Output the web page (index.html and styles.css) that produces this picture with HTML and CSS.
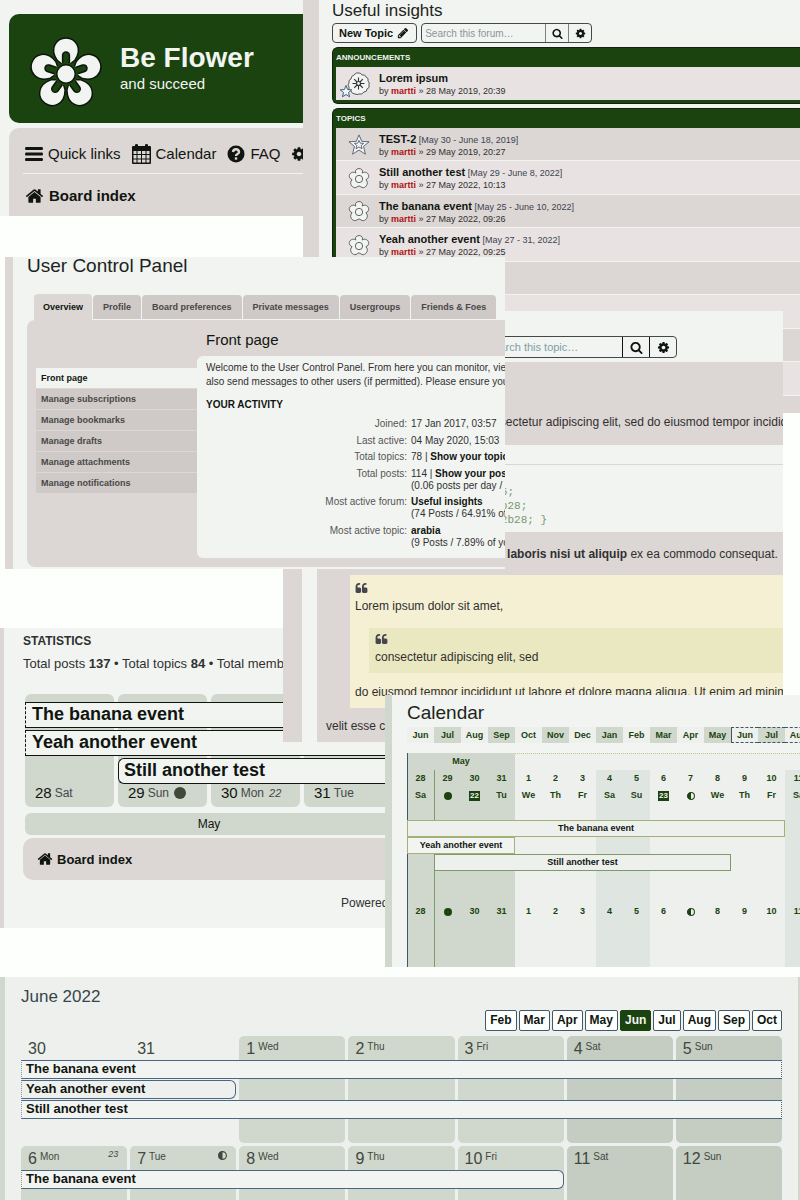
FILE: index.html
```html
<!DOCTYPE html>
<html lang="en">
<head>
<meta charset="utf-8">
<title>Be Flower</title>
<link rel="stylesheet" href="styles.css">
</head>
<body>
<svg class="defs" aria-hidden="true">
  <symbol id="home" viewBox="0 0 1792 1792"><path d="M1472 992v480q0 26-19 45t-45 19h-384v-384h-256v384h-384q-26 0-45-19t-19-45v-480q0-1 .5-3t.5-3l575-474 575 474q1 2 1 6zm223-69l-62 74q-8 9-21 11h-3q-13 0-21-7l-692-577-692 577q-12 8-24 7-13-2-21-11l-62-74q-8-10-7-23.5t11-21.5l719-599q32-26 76-26t76 26l244 204v-195q0-14 9-23t23-9h192q14 0 23 9t9 23v408l219 182q10 8 11 21.5t-7 23.5z"/></symbol>
  <symbol id="cog" viewBox="0 0 1792 1792"><path d="M1152 896q0-106-75-181t-181-75-181 75-75 181 75 181 181 75 181-75 75-181zm512-109v222q0 12-8 23t-20 13l-185 28q-19 54-39 91 35 50 107 138 10 12 10 25t-9 23q-27 37-99 108t-94 71q-12 0-26-9l-138-108q-44 23-91 38-16 136-29 186-7 28-36 28h-222q-14 0-24.5-8.5t-11.5-21.5l-28-184q-49-16-90-37l-141 107q-10 9-25 9-14 0-25-11-126-114-165-168-7-10-7-23 0-12 8-23 15-21 51-66.5t54-70.5q-27-50-41-99l-183-27q-13-2-21-12.5t-8-23.5v-222q0-12 8-23t19-13l186-28q14-46 39-92-40-57-107-138-10-12-10-24 0-10 9-23 26-36 98.5-107.5t94.5-71.5q13 0 26 10l138 107q44-23 91-38 16-136 29-186 7-28 36-28h222q14 0 24.5 8.5t11.5 21.5l28 184q49 16 90 37l142-107q9-9 24-9 13 0 25 10 129 119 165 170 7 8 7 22 0 12-8 23-15 21-51 66.5t-54 70.5q26 50 41 98l183 28q13 2 21 12.5t8 23.5z"/></symbol>
  <symbol id="search" viewBox="0 0 1792 1792"><path d="M1216 832q0-185-131.5-316.5t-316.5-131.5-316.5 131.5-131.5 316.5 131.5 316.5 316.5 131.5 316.5-131.5 131.5-316.5zm512 832q0 52-38 90t-90 38q-54 0-90-38l-343-342q-179 124-399 124-143 0-273.5-55.5t-225-150-150-225-55.5-273.5 55.5-273.5 150-225 225-150 273.5-55.5 273.5 55.5 225 150 150 225 55.5 273.5q0 220-124 399l343 343q37 37 37 90z"/></symbol>
  <symbol id="pencil" viewBox="0 0 1792 1792"><path d="M491 1536l91-91-235-235-91 91v107h128v128h107zm523-928q0-22-22-22-10 0-17 7l-542 542q-7 7-7 17 0 22 22 22 10 0 17-7l542-542q7-7 7-17zm-54-192l416 416-832 832h-416v-416zm683 96q0 53-37 90l-166 166-416-416 166-165q36-38 90-38 53 0 91 38l235 234q37 39 37 91z"/></symbol>
  <symbol id="bars" viewBox="0 0 18 18"><path d="M1 2h16q1 0 1 1.5T17 5H1Q0 5 0 3.500T1 2zm0 5.500h16q1 0 1 1.500t-1 1.500H1q-1 0-1-1.500t1-1.500zM1 13h16q1 0 1 1.500T17 16H1q-1 0-1-1.500T1 13z"/></symbol>
  <symbol id="calendar" viewBox="0 0 19 20"><path fill-rule="evenodd" d="M3 2V1q0-1 1.500-1T6 1v1h7V1q0-1 1.500-1T16 1v1h2q1 0 1 1v16q0 1-1 1H1q-1 0-1-1V3q0-1 1-1zM1.500 7v3h3V7zm4 0v3h3.500V7zM10 7v3h3.500V7zm4.500 0v3h3V7zM1.500 11v3.500h3V11zm4 0v3.500H9V11zm4.500 0v3.500h3.500V11zm4.500 0v3.500h3V11zm-13 4.500v3h3v-3zm4 0v3H9v-3zm4.500 0v3h3.500v-3zm4.500 0v3h3v-3z"/></symbol>
  <symbol id="help" viewBox="0 0 18 18"><circle cx="9" cy="9" r="8.500"/><path d="M6 7Q6.300 4.300 9 4.300T12 7q0 1.300-1.500 2T9 11" fill="none" stroke="#dcd6d4" stroke-width="2.400"/><path d="M7.800 12.300h2.400v2.400H7.800z" fill="#dcd6d4"/></symbol>
  <symbol id="quote" viewBox="0 0 1792 1408"><g id="mark"><path d="M832 768v384q0 80-56 136t-136 56H256q-80 0-136-56T64 1152V448q0-104 40.500-198.500T214 86 377.500-23.500 576-64h64q26 0 45 19t19 45v128q0 26-19 45t-45 19h-64q-106 0-181 75t-75 181v32q0 40 28 68t68 28h224q80 0 136 56t56 136z" transform="translate(0 64)"/></g><use href="#mark" x="896"/></symbol>
  <symbol id="half" viewBox="0 0 10 10"><circle cx="5" cy="5" r="4.300" fill="none" stroke="currentColor" stroke-width="1.300"/><path d="M5 .5a4.500 4.500 0 0 0 0 9z"/></symbol>
  <symbol id="disc" viewBox="0 0 10 10"><circle cx="5" cy="5" r="5"/></symbol>
  <symbol id="bloom" viewBox="-12 -12 24 24"><g fill="#f2f4f1" stroke="#45484a" stroke-width=".9"><path d="M-3.500-6.500C-6-13 6-13 3.500-6.500 9-10 14-2 7.500.8 12 5 6 12 2 8.500L0 7.500-2 8.500C-6 12-12 5-7.500.8-14-2-9-10-3.500-6.500z"/><circle r="4"/></g></symbol>
  <symbol id="star" viewBox="-12 -12 24 24"><g fill="#f2f4f1" stroke="#45506a" stroke-width=".9"><path d="M0-11l3 7 8 .5-6 5 2 8.500-7-4.500-7 4.500 2-8.500-6-5 8-.5z"/><path d="M0-5l1.500 3 3.500.2-2.600 2.300.9 3.500L0 2.200-3.300 4l.9-3.500L-5-1.800-1.500-2z"/></g></symbol>
  <symbol id="news" viewBox="0 0 30 26"><g fill="#f2f4f1" stroke="#45484a" stroke-width=".9"><path d="M19 1q2 0 3 2 3-1 4 2 3 1 2 4 2 2 1 4 1 3-2 4 0 3-3 3-2 3-5 2-2 1-4 0-3 0-4-3-3-1-2-4-2-2 0-4-1-3 2-4 0-3 3-4 2-3 5-2z"/></g><g fill="none" stroke="#303436" stroke-width="1.100"><path d="M18.500 5.500v4m0 4v4M12.500 11.500h4m4 0h4M14.200 7.200l2.800 2.800m3 3l2.800 2.800m0-8.600L20 10m-3 3l-2.800 2.800"/><circle cx="18.500" cy="11.500" r="2" fill="#f2f4f1"/></g><path d="M6 13.500l1.600 4 4.200.3-3.300 2.700 1.100 4.300L6 22.500l-3.600 2.300 1.100-4.300L.2 17.800l4.200-.3z" fill="#f2f4f1" stroke="#3c6480"/></symbol>
  <symbol id="logo" viewBox="-38 -38 76 76">
    <g id="petal"><path d="M-4-10L-9-14C-18-27-9-37 0-37S18-27 9-14L4-10z" fill="#f2f4f1" stroke="#0b150a" stroke-width="1.500"/><path d="M0-8V-19" stroke="#0b150a" stroke-width="8.500" stroke-linecap="round"/><path d="M0-5V-19" stroke="#1b430f" stroke-width="5.500" stroke-linecap="round"/></g>
    <use href="#petal" transform="rotate(72)"/><use href="#petal" transform="rotate(144)"/><use href="#petal" transform="rotate(216)"/><use href="#petal" transform="rotate(288)"/>
    <circle r="12" fill="#1b430f"/><circle r="9.500" fill="#f2f4f1" stroke="#0b150a" stroke-width="1.500"/>
  </symbol>
</svg>

<main class="canvas">
  <section class="window brand">
    <header class="banner">
      <svg class="logo"><use href="#logo"/></svg>
      <div><h1>Be Flower</h1><p>and succeed</p></div>
    </header>
    <nav class="nav">
      <div class="nav-links">
        <a href="#"><svg class="i18"><use href="#bars"/></svg>Quick links</a>
        <a href="#"><svg class="i19"><use href="#calendar"/></svg>Calendar</a>
        <a href="#"><svg class="i18"><use href="#help"/></svg>FAQ</a>
        <a href="#" aria-label="Settings"><svg class="i16"><use href="#cog"/></svg></a>
      </div>
      <a class="crumb" href="#"><svg class="i19"><use href="#home"/></svg>Board index</a>
    </nav>
  </section>

  <section class="window forum">
    <h2>Useful insights</h2>
    <div class="actions">
      <button class="btn">New Topic <svg class="i12"><use href="#pencil"/></svg></button>
      <form class="search">
        <input type="search" aria-label="Search this forum" placeholder="Search this forum…">
        <button type="button" aria-label="Search"><svg class="i11"><use href="#search"/></svg></button>
        <button type="button" aria-label="Advanced search"><svg class="i11"><use href="#cog"/></svg></button>
      </form>
    </div>
    <div class="block news">
      <h3>Announcements</h3>
      <ul>
        <li><svg class="wide"><use href="#news"/></svg><div><a href="#">Lorem ipsum</a><p>by <b>martti</b> » 28 May 2019, 20:39</p></div></li>
      </ul>
    </div>
    <div class="block topics">
      <h3>Topics</h3>
      <ul>
        <li><svg><use href="#star"/></svg><div><a href="#">TEST-2</a> <span>[May 30 - June 18, 2019]</span><p>by <b>martti</b> » 29 May 2019, 20:27</p></div></li>
        <li><svg><use href="#bloom"/></svg><div><a href="#">Still another test</a> <span>[May 29 - June 8, 2022]</span><p>by <b>martti</b> » 27 May 2022, 10:13</p></div></li>
        <li><svg><use href="#bloom"/></svg><div><a href="#">The banana event</a> <span>[May 25 - June 10, 2022]</span><p>by <b>martti</b> » 27 May 2022, 09:26</p></div></li>
        <li><svg><use href="#bloom"/></svg><div><a href="#">Yeah another event</a> <span>[May 27 - 31, 2022]</span><p>by <b>martti</b> » 27 May 2022, 09:25</p></div></li>
        <li></li><li></li><li></li><li></li><li></li>
      </ul>
    </div>
  </section>

  <section class="window stats">
    <h3>Statistics</h3>
    <p class="totals">Total posts <b>137</b> • Total topics <b>84</b> • Total members</p>
    <div class="strip">
      <div class="day d1"></div><div class="day d2"></div><div class="day d3"></div><div class="day d4"></div>
      <a class="event e1" href="#">The banana event</a>
      <a class="event e2" href="#">Yeah another event</a>
      <a class="event e3" href="#">Still another test</a>
      <div class="date d1">28 <small>Sat</small></div>
      <div class="date d2">29 <small>Sun</small> <svg><use href="#disc"/></svg></div>
      <div class="date d3">30 <small>Mon</small> <em>22</em></div>
      <div class="date d4">31 <small>Tue</small></div>
    </div>
    <div class="month">May</div>
    <nav class="foot"><a href="#"><svg class="i16"><use href="#home"/></svg>Board index</a></nav>
    <p class="powered">Powered</p>
  </section>

  <section class="window topic">
    <div class="tools">
      <form class="search">
        <input type="search" aria-label="Search this topic" placeholder="Search this topic…">
        <button type="button" aria-label="Search"><svg class="i13"><use href="#search"/></svg></button>
        <button type="button" aria-label="Advanced search"><svg class="i13"><use href="#cog"/></svg></button>
      </form>
    </div>
    <p class="post">Lorem ipsum dolor sit amet, consectetur adipiscing elit, sed do eiusmod tempor incididunt</p>
    <div class="codebox"><pre>  outline: solid #334455;
  border:1px solid #102b28;
  background-color: #102b28; }</pre></div>
    <p class="after">quis nostrud exercitation ullamco <b>laboris nisi ut aliquip</b> ex ea commodo consequat.</p>
    <blockquote>
      <svg><use href="#quote"/></svg>
      <p>Lorem ipsum dolor sit amet,</p>
      <blockquote>
        <svg><use href="#quote"/></svg>
        <p>consectetur adipiscing elit, sed</p>
      </blockquote>
      <p>do eiusmod tempor incididunt ut labore et dolore magna aliqua. Ut enim ad minim veniam</p>
    </blockquote>
    <p class="tail">velit esse cillum</p>
  </section>

  <section class="window ucp">
    <h2>User Control Panel</h2>
    <nav class="tabs">
      <a class="on" href="#">Overview</a><a href="#">Profile</a><a href="#">Board preferences</a><a href="#">Private messages</a><a href="#">Usergroups</a><a href="#">Friends &amp; Foes</a>
    </nav>
    <div class="panel">
      <nav class="side">
        <a class="on" href="#">Front page</a><a href="#">Manage subscriptions</a><a href="#">Manage bookmarks</a><a href="#">Manage drafts</a><a href="#">Manage attachments</a><a href="#">Manage notifications</a>
      </nav>
      <div class="main">
        <h3>Front page</h3>
        <div class="sheet">
          <p>Welcome to the User Control Panel. From here you can monitor, view and<br>also send messages to other users (if permitted). Please ensure you read</p>
          <h4>Your activity</h4>
          <dl>
            <dt>Joined:</dt><dd>17 Jan 2017, 03:57</dd>
            <dt>Last active:</dt><dd>04 May 2020, 15:03</dd>
            <dt>Total topics:</dt><dd>78 | <a href="#">Show your topics</a></dd>
            <dt>Total posts:</dt><dd>114 | <a href="#">Show your posts</a><br>(0.06 posts per day / 5%)</dd>
            <dt>Most active forum:</dt><dd><a href="#">Useful insights</a><br>(74 Posts / 64.91% of your posts)</dd>
            <dt>Most active topic:</dt><dd><a href="#">arabia</a><br>(9 Posts / 7.89% of your posts)</dd>
          </dl>
        </div>
      </div>
    </div>
  </section>

  <section class="window timeline">
    <h2>Calendar</h2>
    <nav class="months">
      <a href="#">Jun</a><a href="#">Jul</a><a href="#">Aug</a><a href="#">Sep</a><a href="#">Oct</a><a href="#">Nov</a><a href="#">Dec</a><a href="#">Jan</a><a href="#">Feb</a><a href="#">Mar</a><a href="#">Apr</a><a href="#">May</a><a class="cur first" href="#">Jun</a><a class="cur" href="#">Jul</a><a class="cur" href="#">Aug</a>
    </nav>
    <div class="gantt">
      <div class="may"></div><div class="june"></div><div class="we w1"></div><div class="we w2"></div><div class="today"></div>
      <div class="label">May</div>
      <div class="cells nums"><span>28</span><span>29</span><span>30</span><span>31</span><span>1</span><span>2</span><span>3</span><span>4</span><span>5</span><span>6</span><span>7</span><span>8</span><span>9</span><span>10</span><span>11</span></div>
      <div class="cells names"><span>Sa</span><span><svg><use href="#disc"/></svg></span><span><b>22</b></span><span>Tu</span><span>We</span><span>Th</span><span>Fr</span><span>Sa</span><span>Su</span><span><b>23</b></span><span><svg><use href="#half"/></svg></span><span>We</span><span>Th</span><span>Fr</span><span>Sa</span></div>
      <a class="bar b1" href="#">The banana event</a>
      <a class="bar b2" href="#">Yeah another event</a>
      <a class="bar b3" href="#">Still another test</a>
      <div class="cells again"><span>28</span><span><svg><use href="#disc"/></svg></span><span>30</span><span>31</span><span>1</span><span>2</span><span>3</span><span>4</span><span>5</span><span>6</span><span><svg><use href="#half"/></svg></span><span>8</span><span>9</span><span>10</span><span>11</span></div>
    </div>
  </section>

  <section class="window monthly">
    <h2>June 2022</h2>
    <nav class="picker">
      <a href="#">Feb</a><a href="#">Mar</a><a href="#">Apr</a><a href="#">May</a><a class="on" href="#">Jun</a><a href="#">Jul</a><a href="#">Aug</a><a href="#">Sep</a><a href="#">Oct</a>
    </nav>
    <div class="week">
      <div class="cell d1 out">30</div><div class="cell d2 out">31</div><div class="cell d3">1 <small>Wed</small></div><div class="cell d4">2 <small>Thu</small></div><div class="cell d5">3 <small>Fri</small></div><div class="cell d6 end">4 <small>Sat</small></div><div class="cell d7 end">5 <small>Sun</small></div>
      <a class="item r2 full open" href="#">The banana event</a>
      <a class="item r3 two" href="#">Yeah another event</a>
      <a class="item r4 full open" href="#">Still another test</a>
    </div>
    <div class="week">
      <div class="cell d1">6 <small>Mon</small><em>23</em></div><div class="cell d2">7 <small>Tue</small><svg><use href="#half"/></svg></div><div class="cell d3">8 <small>Wed</small></div><div class="cell d4">9 <small>Thu</small></div><div class="cell d5">10 <small>Fri</small></div><div class="cell d6 end">11 <small>Sat</small></div><div class="cell d7 end">12 <small>Sun</small></div>
      <a class="item r2 five" href="#">The banana event</a>
    </div>
  </section>
</main>
</body>
</html>
```

FILE: styles.css
```css
:root {
  --paper: #f2f4f1;
  --stone: #dcd6d4;
  --rose: #e8e2e2;
  --green: #1b430f;
  --sage: #d0d7cc;
  --mist: #edf0ed;
  --ink: #101510;
}
* { box-sizing: border-box; }
body {
  margin: 0;
  background: #fdfffd;
  color: #303030;
  font-family: "Liberation Sans", Arial, sans-serif;
}
h1, h2, h3, h4, p, ul, dl, dd, pre, blockquote { margin: 0; padding: 0; }
h2 { font-weight: 400; color: #1c2420; }
ul { list-style: none; }
a { color: inherit; text-decoration: none; }
svg { display: block; flex: none; fill: currentColor; }
small { font-size: inherit; }
button, input { font: inherit; color: inherit; background: none; margin: 0; }
.defs { position: absolute; width: 0; height: 0; }
.i11 { width: 11px; height: 11px; }
.i12 { width: 12px; height: 12px; }
.i13 { width: 13px; height: 13px; }
.i16 { width: 16px; height: 16px; }
.i18 { width: 18px; height: 18px; }
.i19 { width: 19px; height: 20px; }

/* Overlapping windows on a free canvas */
.canvas { position: relative; min-height: 1200px; overflow: hidden; }
.window { position: absolute; isolation: isolate; overflow: hidden; background: var(--paper); white-space: nowrap; }

/* Board header */
.brand { left: 0; top: 0; width: 303px; height: 216px; padding: 14px 0 0 9px; }
.banner {
  display: flex; align-items: center; gap: 17px;
  height: 109px; padding-left: 20px;
  background: var(--green); color: var(--paper);
  border-radius: 10px 0 0 10px;
}
.logo { width: 74px; height: 74px; margin-top: 10px; }
.banner > div { margin-bottom: 2px; }
.banner h1 { font-size: 28px; line-height: 32px; }
.banner p { font-size: 15px; line-height: 20px; }
.nav {
  margin-top: 5px; height: 98px; padding: 2px 0 0 14px;
  background: var(--stone); border-radius: 10px 0 0 10px;
  font-size: 15px; color: var(--ink);
}
.nav-links { display: flex; align-items: center; gap: 11px; height: 44px; padding: 4px 0 0 2px; border-bottom: 1px solid var(--paper); }
.nav-links a, .crumb { display: flex; align-items: center; gap: 5px; }
.crumb { height: 43px; padding-left: 2px; font-weight: 700; }

/* Forum list */
.forum { left: 303px; right: 0; top: 0; height: 413px; padding-left: 13px; border-left: 16px solid var(--stone); }
.forum h2 { font-size: 17px; line-height: 22px; }
.actions { display: flex; gap: 4px; margin-top: 1px; }
.btn {
  display: flex; align-items: center; gap: 4px; height: 20px; padding: 0 7px 0 6px;
  border: 1px solid #45484a; border-radius: 4px;
  font-size: 11px; font-weight: 700; color: var(--ink);
}
.search {
  display: flex; height: 20px; overflow: hidden;
  border: 1px solid #45484a; border-radius: 4px; font-size: 10px; color: var(--ink);
}
.search input { width: 123px; padding: 0 3px; border: 0; }
.search input::placeholder { color: #8a9499; opacity: 1; }
.search button { display: grid; place-items: center; width: 23px; padding: 0; border: 0; border-left: 1px solid #7a8288; }
.block { padding: 0 0 3px 3px; background: var(--green); border: 1px solid #14200f; border-right: 0; border-radius: 6px 0 0 6px; }
.block h3 { padding-top: 1px; font-size: 8px; line-height: 18px; color: var(--paper); text-transform: uppercase; }
.news { margin-top: 4px; }
.topics { margin-top: 4px; }
.block li { display: flex; align-items: center; gap: 9px; padding: 2px 0 0 12px; min-height: 33px; background: var(--rose); font-size: 9px; line-height: 12px; }
.block ul { display: grid; grid-auto-rows: 1fr; }
.topics ul { min-height: 301px; }
.block .topics li { padding-top: 3px; }
.topics li { border-bottom: 1px solid var(--paper); }
.topics li:nth-child(odd) { background: var(--stone); }
.block li svg { width: 22px; height: 22px; }
.block li .wide { width: 30px; height: 26px; }
.block li:has(.wide) { padding-left: 4px; }
.block li a { font-size: 11px; font-weight: 700; color: var(--ink); }
.block li b { color: #b01010; }
.block li span { color: #3c4450; }

/* Statistics */
.stats { left: 0; top: 628px; width: 400px; height: 300px; padding: 4px 0 0 19px; border-left: 4px solid var(--stone); }
.stats h3 { font-size: 12px; line-height: 18px; text-transform: uppercase; }
.totals { margin-top: 4px; font-size: 13px; line-height: 20px; }
.strip {
  display: grid; grid-template: 6px repeat(3, 26px) 21px / repeat(4, 89px);
  gap: 2px 4px; margin: 20px 0 0 2px;
}
.day { grid-row: 1 / -1; background: var(--sage); border-radius: 6px; }
.d1 { grid-column: 1; }
.d2 { grid-column: 2; }
.d3 { grid-column: 3; }
.d4 { grid-column: 4; }
.d5 { grid-column: 5; }
.d6 { grid-column: 6; }
.d7 { grid-column: 7; }
.event { z-index: 1; padding-left: 6px; border: 1px solid var(--ink); border-right: 0; background: var(--paper); font-size: 18px; line-height: 22px; font-weight: 700; color: var(--ink); }
.e1 { grid-area: 2 / 1 / 3 / -1; border-left-style: dashed; }
.e2 { grid-area: 3 / 1 / 4 / -1; border-left-style: dashed; }
.e3 { grid-area: 4 / 2 / 5 / -1; border-radius: 6px 0 0 6px; padding-left: 5px; }
.date { grid-row: 5; display: flex; align-items: center; gap: 3px; padding-left: 10px; font-size: 15px; line-height: 14px; height: 14px; color: var(--ink); }
.date small { font-size: 12px; color: #45484a; }
.date em { margin-left: 2px; font-size: 11px; color: #45484a; }
.date svg { width: 12px; height: 12px; margin-left: 2px; color: #40483a; }
.month { margin: 6px 0 0 2px; width: 368px; background: var(--sage); border-radius: 6px; text-align: center; font-size: 12px; line-height: 22px; color: var(--ink); }
.foot { margin-top: 3px; height: 42px; padding-left: 14px; background: var(--stone); border-radius: 10px 0 0 10px; font-size: 13px; font-weight: 700; color: var(--ink); }
.foot a { display: flex; align-items: center; gap: 4px; height: 42px; }
.powered { margin-top: 14px; padding-left: 318px; font-size: 12px; line-height: 18px; }

/* Topic view */
.topic { left: 283px; top: 311px; width: 500px; height: 431px; padding-left: 15px; border-left: 19px solid var(--stone); font-size: 12px; line-height: 18px; }
.tools { display: flex; height: 51px; padding: 25px 0 0 164px; }
.topic .search { height: 22px; font-size: 11px; }
.topic .search input { width: 140px; padding: 0 4px; }
.topic .search input::placeholder { color: #7ba0a8; }
.topic .search button { width: 27px; border-color: var(--ink); }
.post { padding: 51px 0 14px 12px; background: var(--stone); }
.codebox { height: 87px; padding: 19px 0 0 32px; background: linear-gradient(var(--stone), var(--stone)) 0 19px / 100% 1px no-repeat; }
pre { padding-top: 21px; font: 11px/14px "Liberation Mono", monospace; color: #7a9470; }
.after { padding: 13px 0 12px 12px; background: var(--stone); }
.topic > blockquote { padding: 8px 0 7px 5px; border-left: 33px solid var(--stone); background: #f5efd4; }
blockquote svg { width: 13px; height: 10px; color: #45454f; }
blockquote p { margin-top: 4px; }
blockquote blockquote { margin: 13px 0 10px 14px; padding: 6px 0 7px 6px; background: #eae8c0; }
.tail { padding: 9px 0 12px 9px; background: var(--stone); }

/* User control panel */
.ucp { display: flex; flex-direction: column; left: 5px; top: 257px; width: 500px; height: 312px; padding: 0 0 2px 14px; border-left: 8px solid var(--stone); }
.ucp h2 { font-size: 19px; line-height: 18px; }
.tabs { display: flex; align-items: flex-end; gap: 1px; margin-top: 19px; padding-left: 7px; font-size: 9px; font-weight: 700; color: #484848; }
.tabs a { padding: 0 10px; line-height: 24px; margin-bottom: 1px; background: #cfc9c7; border-radius: 4px 4px 0 0; }
.tabs .on { padding: 0 9px; margin-bottom: 0; line-height: 26px; background: var(--stone); color: var(--ink); }
.panel { display: flex; flex: 1; padding: 0 0 9px 9px; background: var(--stone); border-radius: 8px 0 0 8px; }
.side { display: flex; flex-direction: column; gap: 1px; width: 161px; padding-top: 48px; font-size: 9px; font-weight: 700; color: #484848; }
.side a { padding-left: 5px; line-height: 20px; background: #cfc9c7; }
.side .on { background: var(--paper); color: var(--ink); }
.main { display: flex; flex: 1; flex-direction: column; min-width: 0; }
.main h3 { padding: 10px 0 6px 9px; font-size: 15px; line-height: 20px; font-weight: 400; color: var(--ink); }
.sheet { display: flex; flex: 1; flex-direction: column; padding: 5px 0 9px 9px; background: var(--paper); border-radius: 6px 0 0 6px; font-size: 10px; line-height: 14px; }
.sheet h4 { margin: 9px 0 6px; font-size: 10px; text-transform: uppercase; color: var(--ink); }
.sheet dl { display: grid; flex: 1; grid-template-columns: 201px 1fr; column-gap: 4px; align-content: space-between; line-height: 12px; }
.sheet dt { text-align: right; color: #555; }
.sheet dd a { font-weight: 700; color: var(--ink); }

/* Timeline calendar */
.timeline { left: 385px; right: 0; top: 695px; height: 272px; padding: 7px 0 0 15px; border-left: 7px solid var(--sage); color: var(--green); }
.timeline h2 { font-size: 19px; line-height: 22px; }
.months, .cells { display: grid; grid-template-columns: repeat(15, 27px); text-align: center; font-size: 9px; font-weight: 700; }
.months { margin-top: 3px; line-height: 16px; }
.months a { background: var(--mist); }
.months a:nth-child(even) { background: var(--sage); }
.months .cur { border: dashed #3f5666; border-width: 1px 0; line-height: 14px; }
.months .first { border-left: 1px solid #3f5666; }
.gantt { display: grid; grid-template: 17px 17px 17px 16px 17px 17px 17px 32px 17px 47px / repeat(15, 27px); margin-top: 10px; }
.may { grid-area: 1 / 1 / -1 / 5; background: var(--sage); border-left: 1px solid #3f5666; }
.june { grid-area: 1 / 5 / -1 / -1; background: var(--mist); border-top: 1px dotted #c0c88c; }
.we { background: #dfe6e1; }
.w1 { grid-area: 2 / 8 / -1 / 10; }
.w2 { grid-area: 2 / 15 / -1 / 16; }
.today { grid-area: 2 / 2 / -1 / 3; border-left: 1px solid #7f9a62; }
.label { grid-area: 1 / 1 / 2 / 5; text-align: center; font-size: 9px; line-height: 17px; font-weight: 700; }
.cells { line-height: 17px; }
.cells span { display: grid; place-items: center; }
.cells svg { width: 8px; height: 8px; }
.cells b { padding: 0 1px; font-size: 8px; line-height: 10px; background: var(--green); color: var(--paper); }
.nums { grid-area: 2 / 1 / 3 / -1; }
.names { grid-area: 3 / 1 / 4 / -1; }
.again { grid-area: 9 / 1 / 10 / -1; }
.bar { border: 1px solid #a4b078; background: var(--mist); text-align: center; font-size: 9px; line-height: 15px; font-weight: 700; color: var(--ink); }
.b1 { grid-area: 5 / 1 / 6 / 15; }
.b2 { grid-area: 6 / 1 / 7 / 5; background: var(--paper); }
.b3 { grid-area: 7 / 2 / 8 / 13; border-color: #7f9a62; }

/* Month calendar */
.monthly { left: 0; right: 0; top: 977px; height: 223px; padding: 9px 16px 0 16px; background: var(--mist); border: solid var(--sage); border-width: 0 2px 0 5px; }
.monthly h2 { font-size: 17px; line-height: 22px; color: #36464c; }
.picker { display: flex; justify-content: flex-end; gap: 2px; margin-top: 2px; font-size: 12px; line-height: 19px; font-weight: 700; color: var(--ink); }
.picker a { padding: 0 4px; border: 1px solid #44586c; border-radius: 2px; background: #fdfffd; }
.picker .on { background: var(--green); border-color: var(--green); color: var(--paper); }
.week { display: grid; grid-template: 23px repeat(3, 19px) 23px / repeat(7, 1fr); gap: 1px 3px; margin-top: 5px; }
.week + .week { margin-top: 3px; }
.cell { display: flex; gap: 3px; grid-row: 1 / -1; padding: 0 9px 0 7px; background: var(--sage); border-radius: 5px; font-size: 16px; line-height: 25px; color: #40483f; }
.cell small { font-size: 10px; line-height: 22px; }
.cell em { margin-left: auto; font-size: 9px; line-height: 16px; }
.cell svg { width: 9px; height: 9px; margin: 5px 0 0 auto; }
.out { background: none; }
.end { background: #c5ccc2; }
.item { z-index: 1; padding-left: 4px; border: 1px solid #4a6680; border-left: 1px dotted #8a9499; border-radius: 0 6px 6px 0; background: var(--paper); font-size: 13px; line-height: 15px; font-weight: 700; color: var(--ink); }
.open { border-right-style: dotted; border-radius: 0; }
.r2 { grid-row: 2; }
.r3 { grid-row: 3; }
.r4 { grid-row: 4; }
.full { grid-column: 1 / -1; }
.two { grid-column: 1 / 3; background: var(--mist); }
.five { grid-column: 1 / 6; }
```
